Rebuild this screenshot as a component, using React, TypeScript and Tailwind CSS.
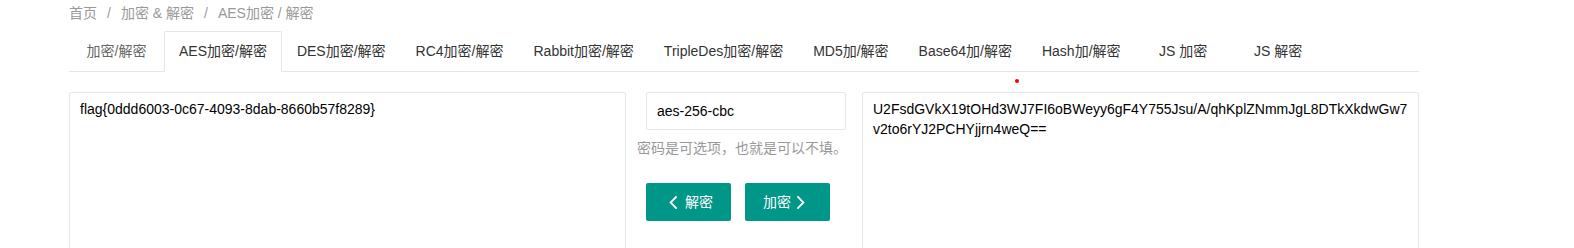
import React from "react";

const font = { fontFamily: '"Liberation Sans", Arial, "Noto Sans CJK SC", sans-serif' };

const tabs = [
  "加密/解密",
  "AES加密/解密",
  "DES加密/解密",
  "RC4加密/解密",
  "Rabbit加密/解密",
  "TripleDes加密/解密",
  "MD5加/解密",
  "Base64加/解密",
  "Hash加/解密",
  "JS 加密",
  "JS 解密",
];

function ChevronLeft() {
  return (
    <svg width="8" height="13" viewBox="0 0 8 13" fill="none">
      <path d="M7 1 L1.6 6.5 L7 12" stroke="#fff" strokeWidth="1.8" strokeLinecap="square" />
    </svg>
  );
}

function ChevronRight() {
  return (
    <svg width="8" height="13" viewBox="0 0 8 13" fill="none">
      <path d="M1 1 L6.4 6.5 L1 12" stroke="#fff" strokeWidth="1.8" strokeLinecap="square" />
    </svg>
  );
}

export default function App() {
  return (
    <div className="relative w-[1574px] h-[248px] overflow-hidden bg-white text-[14px]" style={font}>
      <div className="ml-[69px] w-[1350px]">
        {/* breadcrumb */}
        <div className="h-[26px] leading-[26px] text-[14px] text-[#999] whitespace-nowrap">
          <span>首页</span>
          <span className="mx-[10px]">/</span>
          <span>加密 &amp; 解密</span>
          <span className="mx-[10px]">/</span>
          <span className="text-[#999]">AES加密 / 解密</span>
        </div>

        {/* tabs */}
        <div className="mt-[5px] flex h-[41px] border-b border-[#e6e6e6] whitespace-nowrap">
          {tabs.map((t, i) => (
            <div
              key={t}
              className={`relative min-w-[95px] px-[15px] h-[40px] leading-[40px] text-center ${
                i === 0 ? "text-[#666]" : "text-[#333]"
              }`}
            >
              {i === 1 && (
                <div className="absolute left-0 top-0 w-full h-[41px] bg-white border border-b-0 border-[#e6e6e6] rounded-t-[2px]" />
              )}
              <span className="relative">{t}</span>
            </div>
          ))}
        </div>

        {/* main */}
        <div className="mt-[20px] flex">
          <textarea
            readOnly
            value="flag{0ddd6003-0c67-4093-8dab-8660b57f8289}"
            className="w-[557px] h-[200px] shrink-0 border border-[#e6e6e6] rounded-[2px] px-[10px] py-[6px] leading-[20px] text-[14px] text-black resize-none outline-none break-all"
            style={font}
          />
          <div className="w-[236px] shrink-0 flex flex-col">
            <input
              readOnly
              value="aes-256-cbc"
              className="ml-[20px] w-[200px] h-[38px] border border-[#e6e6e6] rounded-[2px] px-[10px] text-[14px] text-black outline-none"
              style={font}
            />
            <div className="ml-[11px] mt-[8px] h-[20px] leading-[20px] text-[#999] whitespace-nowrap">
              密码是可选项，也就是可以不填。
            </div>
            <div className="ml-[20px] mt-[25px] flex">
              <button className="w-[85px] h-[38px] bg-[#009688] rounded-[2px] text-white flex items-center pl-[23px] gap-[8px]">
                <ChevronLeft />
                <span>解密</span>
              </button>
              <button className="ml-[14px] w-[85px] h-[38px] bg-[#009688] rounded-[2px] text-white flex items-center pl-[18px] gap-[6px]">
                <span>加密</span>
                <ChevronRight />
              </button>
            </div>
          </div>
          <textarea
            readOnly
            value="U2FsdGVkX19tOHd3WJ7FI6oBWeyy6gF4Y755Jsu/A/qhKplZNmmJgL8DTkXkdwGw7v2to6rYJ2PCHYjjrn4weQ=="
            className="w-[557px] h-[200px] shrink-0 border border-[#e6e6e6] rounded-[2px] px-[10px] py-[6px] leading-[20px] text-[14px] text-black resize-none outline-none break-all"
            style={font}
          />
        </div>
      </div>

      {/* red dot */}
      <div className="absolute left-[1015px] top-[79px] w-[4px] h-[4px] rounded-full bg-[#ff0000]" />
    </div>
  );
}
